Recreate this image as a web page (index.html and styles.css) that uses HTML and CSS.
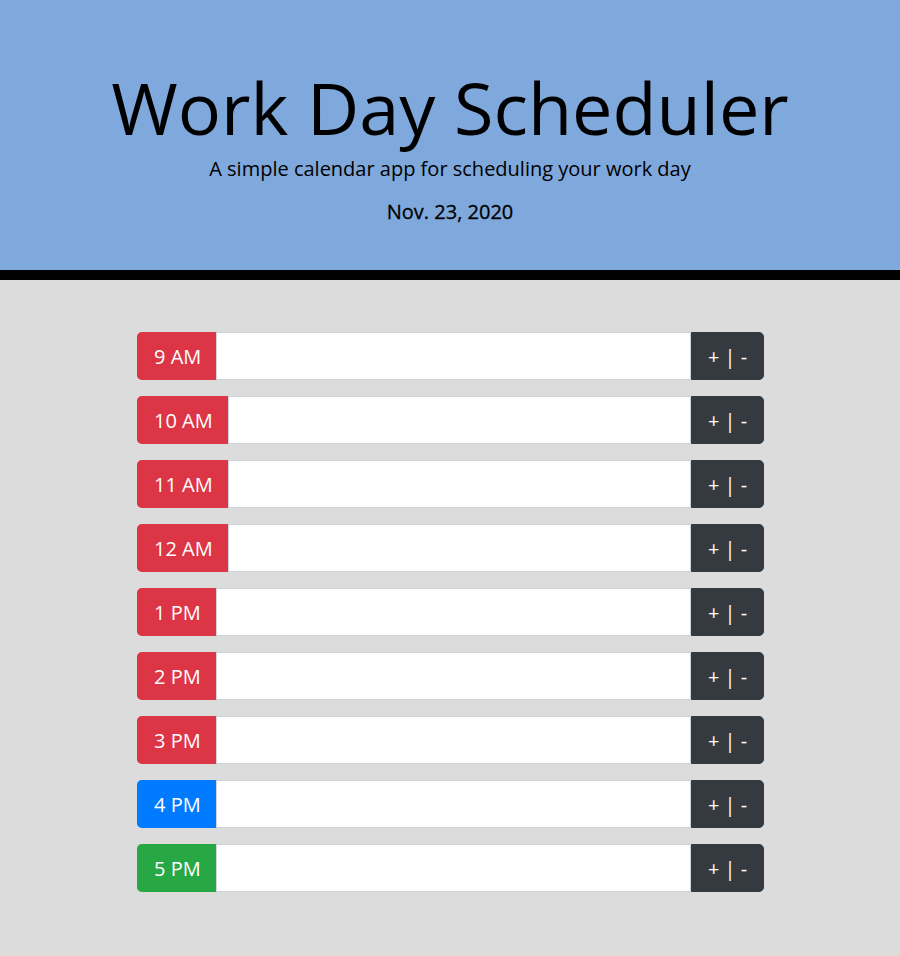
FILE: index.html
```html
<!DOCTYPE html>
<html>
<head>
<meta charset="utf-8">
<link rel="stylesheet" href="styles.css">
</head>
<body>
<header class="jumbotron">
  <h1 class="title">Work Day Scheduler</h1>
  <p class="lead">A simple calendar app for scheduling your work day</p>
  <p class="date">Nov. 23, 2020</p>
</header>
<main class="schedule">
  <div class="row"><span class="hour past">9 AM</span><input class="task" type="text"><button class="save">+ | -</button></div>
  <div class="row"><span class="hour past">10 AM</span><input class="task" type="text"><button class="save">+ | -</button></div>
  <div class="row"><span class="hour past">11 AM</span><input class="task" type="text"><button class="save">+ | -</button></div>
  <div class="row"><span class="hour past">12 AM</span><input class="task" type="text"><button class="save">+ | -</button></div>
  <div class="row"><span class="hour past">1 PM</span><input class="task" type="text"><button class="save">+ | -</button></div>
  <div class="row"><span class="hour past">2 PM</span><input class="task" type="text"><button class="save">+ | -</button></div>
  <div class="row"><span class="hour past">3 PM</span><input class="task" type="text"><button class="save">+ | -</button></div>
  <div class="row"><span class="hour present">4 PM</span><input class="task" type="text"><button class="save">+ | -</button></div>
  <div class="row"><span class="hour future">5 PM</span><input class="task" type="text"><button class="save">+ | -</button></div>
</main>
</body>
</html>
```
FILE: styles.css
```css
* { box-sizing: border-box; }
html, body {
  margin: 0;
  padding: 0;
  background: #dcdcdc;
  font-family: "Open Sans", "Noto Sans", sans-serif;
  color: #212529;
}
.jumbotron {
  background: #7fa8dc;
  border-bottom: 10px solid #000;
  text-align: center;
  padding: 64px 32px 43px;
  color: #000;
}
.title {
  margin: 0;
  font-size: 72px;
  font-weight: 400;
  line-height: 1.2;
}
.lead {
  margin: 4px 0 13px;
  font-size: 20px;
  font-weight: 400;
  line-height: 1.5;
}
.date {
  margin: 0;
  font-size: 20px;
  font-weight: 400;
  line-height: 1.5;
  -webkit-text-stroke: 0.3px #000;
}
.schedule {
  width: 627px;
  margin: 52px 0 0 137px;
  display: flex;
  flex-direction: column;
  gap: 16px;
  padding-bottom: 64px;
}
.row {
  display: flex;
  height: 48px;
}
.hour {
  display: flex;
  align-items: center;
  padding: 0 15px 0 16px;
  font-size: 20px;
  color: #fff;
  border-radius: 4.8px 0 0 4.8px;
  border: 1px solid transparent;
  border-right: none;
}
.past { background-color: #dc3545; }
.present { background-color: #007bff; }
.future { background-color: #28a745; }
.task {
  flex: 1;
  min-width: 0;
  border: 1px solid #ced4da;
  background: #fff;
  font-family: inherit;
  font-size: 20px;
  padding: 0 16px;
  outline: none;
}
.save {
  width: 73px;
  background: #343a40;
  color: #fff;
  border: 1px solid #343a40;
  border-radius: 0 4.8px 4.8px 0;
  font-family: inherit;
  font-size: 20px;
  padding: 0;
}
```
